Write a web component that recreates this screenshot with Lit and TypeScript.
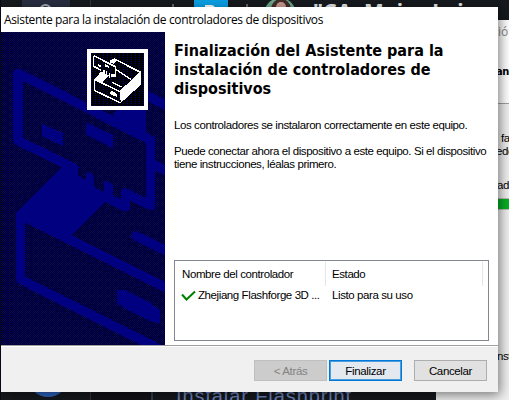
import { LitElement, html, css } from "lit";
import { customElement } from "lit/decorators.js";

@customElement("wizard-art")
class WizardArt extends LitElement {
  static styles = css`
    /* One-pixel column and row stripes; their difference is a checkerboard. */
    :host {
      display: block; position: relative; width: 164px; height: 313px; isolation: isolate;
      background:
        linear-gradient(90deg, #000080 50%, #000 50%) 0 0 / 2px 2px,
        linear-gradient(#000080 50%, #000 50%) 0 0 / 2px 2px;
      background-blend-mode: difference;
    }
    svg { display: block; shape-rendering: crispEdges; }
    .solid { fill: #000080; }
    .line { fill: none; stroke: #000080; stroke-width: 28; stroke-linejoin: round; stroke-linecap: round; }
    .emblem {
      position: absolute; left: 86px; top: 17px; border: 4px solid #fff;
      background:
        linear-gradient(90deg, #0000ff 25%, #000 25%) 0 0 / 4px 4px,
        linear-gradient(#000080 50%, #000 50%) 0 0 / 2px 2px;
      background-blend-mode: multiply;
    }
    .paper { fill: #fff; }
    .ink { fill: none; stroke: #fff; stroke-width: 4.5; stroke-linejoin: round; }
  `;

  render() {
    return html`
      <svg width="164" height="313" viewBox="3 6 492 939" aria-hidden="true">
        <path class="line" d="M54 130 L452 330 V526 L376 489 V530 L318 502" />
        <path class="line" d="M54 130 V332 L222 414" />
        <path class="solid" d="M180 414 L234 404 V437 L258 450 V424 L282 435 V470 L312 486 V450 L338 463 V500 L318 515 L216 615 L76 579 L48 550 Z" />
        <path class="line" d="M62 562 V748 L495 966" />
        <path class="line" d="M62 556 L510 779" />
        <path class="line" d="M408 618 L510 668" />
        <path class="solid" d="M126 281 L190 310 V349 L126 318 Z M258 277 L339 315 V355 L258 313 Z" />
        <path class="solid" d="M351 779 L378 781 L456 821 L480 842 V880 L447 872 L375 836 L351 818 Z" />
        <path class="solid" d="M338 256 L360 230 H438 V318 Z" />
        <path class="line" d="M430 192 L510 232 M452 400 L510 428" />
      </svg>
      <svg class="emblem" width="53" height="53" viewBox="273 69 159 159" aria-hidden="true">
        <path class="paper" d="M282 149 L303 125 L327 137 L304 160 Z M360 185 L423 127 V164 L362 219 Z M327 93 L343 85 L350 90 L341 102 Z" />
        <path class="ink" d="M281 77 L346 110 V139 L333 134 M281 77 V109 L304 121" />
        <path class="ink" d="M333 99 L343 87 L422 127 L360 185 L283 148 V181 L362 219 M346 117 L392 148" />
        <path class="ink" d="M337 157 L365 171" />
        <path class="paper" d="M293 101 L304 107 V113 L293 108 Z M315 102 L328 108 V114 L315 109 Z M309 121 h5 v13 h-5 Z M318 124 h4 v13 h-4 Z M326 128 h5 v15 h-5 Z M334 132 h12 v10 h-12 Z" />
        <path class="paper" d="M329 185 L338 184 L351 192 V200 L342 199 L330 192 Z" />
      </svg>
    `;
  }
}

@customElement("app-root")
class AppRoot extends LitElement {
  static styles = css`
    :host {
      display: block; position: relative; width: 509px; height: 400px; overflow: hidden;
      background: #16191d; color: #000; white-space: nowrap;
      font: 11.5px/13px "Liberation Sans", Arial, sans-serif;
    }
    .edge { position: absolute; left: 0; top: 0; width: 1px; height: 400px; background: #080b18; }
    .tab { position: absolute; left: 22px; top: 0; width: 48px; height: 10px; background: #282d40; }
    .ring { position: absolute; left: 39px; top: 4px; width: 9px; height: 9px; border: 2px solid #a8abb5; border-radius: 50%; }
    .rule { position: absolute; left: 90px; top: 0; width: 1px; height: 400px; background: #30343a; }
    .tile { position: absolute; left: 194px; top: 0; width: 34px; height: 10px; background: #0b9fe3; }
    .tile::after { content: ""; position: absolute; left: 11px; top: 5px; width: 10px; height: 6px; border-radius: 0 4px 0 0; background: #fff; }
    .tick { position: absolute; top: 4px; width: 2px; height: 6px; background: #62666b; }
    .t1 { left: 172px; }
    .t2 { left: 246px; }
    .avatar { position: absolute; left: 264px; top: -2px; width: 32px; height: 32px; border-radius: 50%; overflow: hidden; background: #6ba78b; }
    .hair { position: absolute; left: 7px; top: 1px; width: 20px; height: 24px; border-radius: 10px; background: #442d2b; }
    .face { position: absolute; left: 12px; top: 4px; width: 10px; height: 12px; border-radius: 5px; background: #c99c90; }
    .chat { position: absolute; left: 313px; top: -1px; font: bold 21px/24px "Noto Sans", sans-serif; color: #e4e6e8; letter-spacing: .3px; }
    .behind { position: absolute; left: 436px; top: 20px; width: 73px; height: 380px; background: #f0f0f0; }
    .behind-top { height: 83px; background: #fff; border-bottom: 1px solid #a0a0a0; }
    .progress { position: absolute; left: 40px; top: 178px; width: 33px; height: 10px; background: #06b025; border: 1px solid #bcbcbc; border-width: 1px 0; }
    .bit { position: absolute; left: 61px; }
    .b1 { left: 62px; top: 4px; font: 12px/16px "Open Sans", sans-serif; color: #888; }
    .b2 { left: 60px; top: 44px; font: bold 11px/16px "DejaVu Sans Condensed", sans-serif; letter-spacing: -.4px; }
    .b3 { left: 65px; top: 112px; letter-spacing: -.4px; }
    .b4 { left: 60px; top: 125px; letter-spacing: -.4px; }
    .b5 { top: 159px; letter-spacing: -.4px; }
    .b6 { top: 330px; letter-spacing: -.4px; }
    .globe { position: absolute; left: 28px; top: 357px; width: 40px; height: 40px; border-radius: 50%; background: #2f66c5; }
    .slot { position: absolute; left: 91px; top: 392px; width: 60px; height: 8px; background: #131217; border-right: 2px solid #353d50; }
    .install { position: absolute; left: 176px; top: 384px; font: 20px/24px "Liberation Sans", sans-serif; color: #6f87c4; letter-spacing: .9px; }

    .dialog {
      position: absolute; left: 1px; top: 7px; width: 497px; height: 385px; background: #fff;
      display: flex; flex-direction: column; box-shadow: 2px 3px 11px rgba(0, 0, 0, .5);
    }
    .title { box-sizing: border-box; height: 25px; padding: 1px 0 0 3px; font: 12px/24px "Open Sans", sans-serif; letter-spacing: -.35px; flex: none; }
    .body { display: flex; height: 313px; }
    .content { flex: 1; padding: 9px 9px 0 9px; display: flex; flex-direction: column; }
    h1 { margin: 0; font: bold 16px/19px "DejaVu Sans Condensed", sans-serif; }
    p { margin: 21px 0 0; letter-spacing: -.41px; }
    p + p { margin-top: 13px; }
    .list { margin-top: 89px; width: 313px; height: 79px; border: 1px solid #828790; letter-spacing: -.41px; }
    .row { display: grid; grid-template-columns: 151px 157px; height: 21px; line-height: 21px; }
    .head { padding-top: 1px; height: 23px; line-height: 24px; }
    .head span { padding-left: 7px; border-right: 1px solid #e5e5e5; box-sizing: border-box; }
    .head span + span { padding-left: 6px; }
    .name { display: flex; align-items: center; padding-left: 6px; }
    .name svg { margin-right: 2px; flex: none; }
    .state { padding-left: 6px; }
    .footer {
      box-sizing: border-box; height: 47px; background: #f0f0f0; border-top: 1px solid #a0a0a0;
      box-shadow: inset 0 1px #fff; display: flex; justify-content: flex-end; align-items: flex-start; padding: 14px 11px 0 0;
    }
    button {
      box-sizing: border-box; width: 73px; height: 21px; padding: 1px 0 0; border: 1px solid #adadad;
      background: #e1e1e1; color: #000; font: inherit; line-height: 18px; letter-spacing: -.35px;
    }
    .off { background: #ccc; border-color: #bfbfbf; color: #838383; }
    .primary { border-color: #0078d7; box-shadow: inset 0 0 0 1px #4a9de0; background: #e3e9ef; margin: 0 12px 0 2px; }
  `;

  render() {
    return html`
      <div class="rule"></div><div class="edge"></div>
      <div class="tab"></div><div class="ring"></div>
      <div class="tick t1"></div><div class="tile"></div><div class="tick t2"></div>
      <div class="avatar"><div class="hair"></div><div class="face"></div></div>
      <div class="globe"></div><div class="slot"></div>
      <div class="install">Instalar Flashprint</div>
      <div class="chat">"CA. Mejor Laine</div>
      <div class="behind">
        <div class="behind-top"></div>
        <div class="progress"></div>
        <span class="bit b1">ió</span><span class="bit b2">an</span>
        <span class="bit b3">fa</span><span class="bit b4">ede</span>
        <span class="bit b5">ad</span><span class="bit b6">nst</span>
      </div>
      <div class="dialog">
        <div class="title"><span>Asistente para la instalación de controladores de dispositivos</span></div>
        <div class="body">
          <wizard-art></wizard-art>
          <div class="content">
            <h1>Finalización del Asistente para la<br />instalación de controladores de<br />dispositivos</h1>
            <p>Los controladores se instalaron correctamente en este equipo.</p>
            <p>Puede conectar ahora el dispositivo a este equipo. Si el dispositivo<br />tiene instrucciones, léalas primero.</p>
            <div class="list">
              <div class="row head"><span>Nombre del controlador</span><span>Estado</span></div>
              <div class="row">
                <div class="name">
                  <svg width="15" height="12" viewBox="0 0 15 12"><path d="M1 4.5 L5.5 9.5 L14 1.5" fill="none" stroke="#008000" stroke-width="2" /></svg>
                  Zhejiang Flashforge 3D ...
                </div>
                <div class="state">Listo para su uso</div>
              </div>
            </div>
          </div>
        </div>
        <div class="footer">
          <button class="off" disabled>&lt; Atrás</button>
          <button class="primary">Finalizar</button>
          <button>Cancelar</button>
        </div>
      </div>
    `;
  }
}
